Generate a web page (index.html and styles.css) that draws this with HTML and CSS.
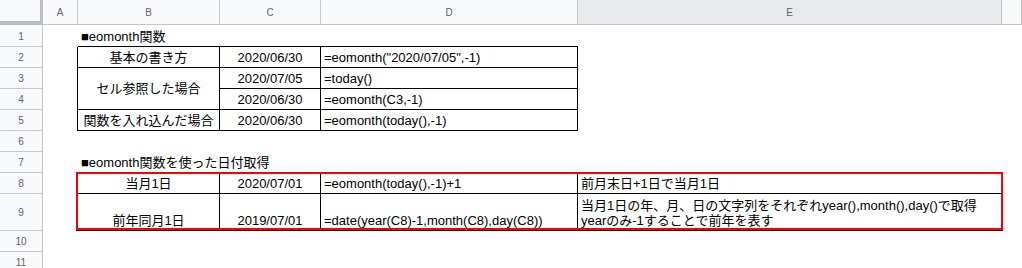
FILE: index.html
```html
<!DOCTYPE html>
<html>
<head>
    <title>eomonth関数</title>
    <meta charset="utf-8">
    <link rel="stylesheet" href="styles.css">
</head>
<body>
    <div class="sheet">
        <!-- column headers -->
        <div class="hd corner"></div>
        <div class="hd">A</div>
        <div class="hd">B</div>
        <div class="hd">C</div>
        <div class="hd">D</div>
        <div class="hd sel">E</div>
        <div class="hd"></div>

        <!-- 1 -->
        <div class="rh">1</div>
        <div class="cell"></div>
        <div class="cell bb nowrap">■eomonth関数</div>
        <div class="cell bb"></div>
        <div class="cell bb"></div>
        <div class="cell"></div>
        <div class="cell"></div>

        <!-- 2 -->
        <div class="rh">2</div>
        <div class="cell br"></div>
        <div class="cell box c">基本の書き方</div>
        <div class="cell box c">2020/06/30</div>
        <div class="cell box">=eomonth("2020/07/05",-1)</div>
        <div class="cell"></div>
        <div class="cell"></div>

        <!-- 3 -->
        <div class="rh">3</div>
        <div class="cell br"></div>
        <div class="cell box c mid span2">セル参照した場合</div>
        <div class="cell box c">2020/07/05</div>
        <div class="cell box">=today()</div>
        <div class="cell"></div>
        <div class="cell"></div>

        <!-- 4 -->
        <div class="rh">4</div>
        <div class="cell br"></div>
        <div class="cell box c">2020/06/30</div>
        <div class="cell box">=eomonth(C3,-1)</div>
        <div class="cell"></div>
        <div class="cell"></div>

        <!-- 5 -->
        <div class="rh">5</div>
        <div class="cell br"></div>
        <div class="cell box c">関数を入れ込んだ場合</div>
        <div class="cell box c">2020/06/30</div>
        <div class="cell box">=eomonth(today(),-1)</div>
        <div class="cell"></div>
        <div class="cell"></div>

        <!-- 6 -->
        <div class="rh">6</div>
        <div class="cell"></div>
        <div class="cell"></div>
        <div class="cell"></div>
        <div class="cell"></div>
        <div class="cell"></div>
        <div class="cell"></div>

        <!-- 7 -->
        <div class="rh">7</div>
        <div class="cell"></div>
        <div class="cell bb nowrap">■eomonth関数を使った日付取得</div>
        <div class="cell bb"></div>
        <div class="cell bb"></div>
        <div class="cell bb"></div>
        <div class="cell"></div>

        <!-- 8-9: highlighted range -->
        <div class="rh">8</div>
        <div class="cell br"></div>
        <div class="block">
            <div class="cell box c">当月1日</div>
            <div class="cell box c">2020/07/01</div>
            <div class="cell box">=eomonth(today(),-1)+1</div>
            <div class="cell box">前月末日+1日で当月1日</div>
            <div class="cell box c">前年同月1日</div>
            <div class="cell box c">2019/07/01</div>
            <div class="cell box">=date(year(C8)-1,month(C8),day(C8))</div>
            <div class="cell box nowrap">当月1日の年、月、日の文字列をそれぞれyear(),month(),day()で取得<br>yearのみ-1することで前年を表す</div>
        </div>
        <div class="cell"></div>
        <div class="rh">9</div>
        <div class="cell br"></div>
        <div class="cell"></div>

        <!-- 10 -->
        <div class="rh">10</div>
        <div class="cell"></div>
        <div class="cell"></div>
        <div class="cell"></div>
        <div class="cell"></div>
        <div class="cell"></div>
        <div class="cell"></div>

        <!-- 11 -->
        <div class="rh">11</div>
        <div class="cell"></div>
        <div class="cell"></div>
        <div class="cell"></div>
        <div class="cell"></div>
        <div class="cell"></div>
        <div class="cell"></div>
    </div>
</body>
</html>
```

FILE: styles.css
```css
body {
    margin: 0;
    background: #fff;
    overflow: hidden;
    font-family: "Liberation Sans", Arial, "Noto Sans CJK JP", sans-serif;
    color: #000;
}
.sheet {
    display: grid;
    grid-template-columns: 43px 35px 142px 101px 257px 424px 1fr;
    grid-template-rows: 25px 22px repeat(7, 21px) 37px 21px 21px;
}
.sheet > div {
    box-sizing: border-box;
}

/* headers */
.hd, .rh {
    display: flex;
    align-items: center;
    justify-content: center;
    background: #f8f9fa;
    border-right: 1px solid #c4c7c5;
    border-bottom: 1px solid #c4c7c5;
    font-size: 10px;
    color: #5f6368;
}
.hd.sel {
    background: #e8eaed;
}
.corner {
    border-right: 3px solid #bdbdbd;
    border-bottom: 4px solid #bdbdbd;
}
.rh {
    padding-top: 1px;
}

/* cells */
.cell {
    box-sizing: border-box;
    display: flex;
    align-items: flex-end;
    padding: 0 3px 2px;
    font-size: 13px;
    line-height: 15px;
    min-width: 0;
}
.c {
    justify-content: center;
}
.mid {
    align-items: center;
    padding-bottom: 0;
}
.nowrap {
    white-space: nowrap;
}
.span2 {
    grid-row: span 2;
}
.bb {
    border-bottom: 1px solid #000;
}
.br {
    border-right: 1px solid #000;
}
.box {
    border-right: 1px solid #000;
    border-bottom: 1px solid #000;
}

/* B8:E9 with the red frame drawn over it */
.block {
    grid-column: span 4;
    grid-row: span 2;
    display: grid;
    grid-template-columns: 142px 101px 257px 424px;
    grid-template-rows: 21px 37px;
    position: relative;
}
.block::after {
    content: "";
    position: absolute;
    top: -1px;
    left: -2px;
    right: -1px;
    bottom: 1px;
    border: 2px solid #f00;
    box-shadow: 0 1px 0 #000;
    pointer-events: none;
}
```
